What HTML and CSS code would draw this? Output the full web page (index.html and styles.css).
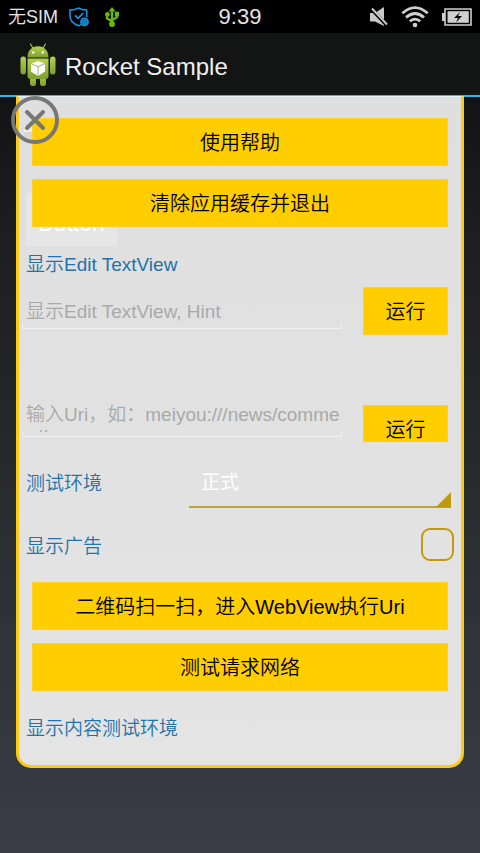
FILE: index.html
```html
<!DOCTYPE html>
<html lang="zh-CN">
<head>
<meta charset="utf-8">
<meta name="viewport" content="width=device-width, initial-scale=1">
<title>Rocket Sample</title>
<link rel="stylesheet" href="styles.css">
</head>
<body>
<div class="status">
  <div class="status-left">
    <span>无SIM</span>
    <svg class="shield" width="20" height="20" viewBox="0 0 20 20" fill="none" stroke="#1593dc" stroke-width="1.600"><path d="M9.500 1C7.500 2.300 4.500 3 1 3.100V9c0 4.500 3.400 7.800 8.500 9.800 1-.3 1.800-.7 2.600-1.200M9.500 1c2 1.300 4.500 2 8.200 2.100V10"/><path d="M6 8.300l3 3 5.200-5.200" stroke-width="1.800"/><circle cx="15.500" cy="14.800" r="3.600" fill="#0a5d92"/><path d="M14 13.500h3v2.600h-3z" stroke-width="1"/></svg>
    <svg class="usb" width="14" height="20" viewBox="0 0 14 20"><path d="M7 3v14M2 8v3.200L7 14.500M12 7v3.200L7 13.300" fill="none" stroke="#69b80d" stroke-width="2.400"/><path d="M7 0l3.500 4.500h-7zM9.800 4.800H14v4.400H9.800z" fill="#69b80d"/><circle cx="2.400" cy="7.300" r="2.400" fill="#69b80d"/><circle cx="7" cy="17" r="2.900" fill="#69b80d"/></svg>
  </div>
  <time class="clock">9:39</time>
  <div class="status-right">
    <svg width="18" height="20" viewBox="0 0 18 20"><path d="M0 6h5l9-6v19L5 14.500H0z" fill="#c9c9c9"/><path d="M0 .5l17 18" stroke="#000" stroke-width="3.600"/><path d="M2 1.500l15 16" stroke="#c9c9c9" stroke-width="2"/></svg>
    <svg width="28" height="22" viewBox="0 0 28 22" fill="none" stroke="#cfcfcf" stroke-width="2.800"><path d="M1.300 7.200Q14-4 26.700 7.200M5 11.400q9-7.800 18 0M8.800 15.300q5.200-4.400 10.400 0"/><circle cx="14" cy="19" r="2.300" fill="#cfcfcf" stroke="none"/></svg>
    <svg width="30" height="18" viewBox="0 0 30 18"><path d="M0 5h3v8H0z" fill="#cfcfcf"/><path d="M3 1h26v16H3z" fill="none" stroke="#cfcfcf" stroke-width="1.600"/><path d="M5.500 3.200h21.300v11.600H5.500z" fill="#cfcfcf"/><path d="M18 4l-6 6h4l-2 4.500 6-6.500h-4z" fill="#000"/></svg>
  </div>
</div>
<header class="appbar">
  <svg width="36" height="44" viewBox="0 0 36 44">
    <defs><linearGradient id="g" x2="0" y2="1"><stop offset="0" stop-color="#b4d24c"/><stop offset="1" stop-color="#7da02c"/></linearGradient></defs>
    <path d="M10.500 1l3 5M25.500 1l-3 5" stroke="#9dbb3e" stroke-width="1.300" stroke-linecap="round"/>
    <g fill="url(#g)"><path d="M7.500 14.500C7.500 7.500 12 3.300 18 3.300s10.500 4.200 10.500 11.200z"/><rect x=".5" y="13.500" width="5.500" height="18" rx="2.700"/><rect x="30" y="13.500" width="5.500" height="18" rx="2.700"/><rect x="10" y="30" width="6" height="13" rx="2.800"/><rect x="20" y="30" width="6" height="13" rx="2.800"/><path d="M7.500 15.500h21V33q0 3-3 3h-15q-3 0-3-3z"/></g>
    <circle cx="13.200" cy="9.500" r="1.200" fill="#fff"/><circle cx="22.800" cy="9.500" r="1.200" fill="#fff"/>
    <path d="M18 18l7 2.600v8L18 33l-7-4.400v-8z" fill="#fff"/><path d="M11 20.600l7 3 7-3M18 23.600V33" fill="none" stroke="#a2ae78"/>
  </svg>
  <h1>Rocket Sample</h1>
</header>
<main class="panel">
  <button class="close" type="button" aria-label="关闭"><svg width="48" height="48" viewBox="0 0 48 48" fill="none" stroke="#777"><circle cx="24" cy="24" r="22" stroke-width="4"/><path d="M16 16l16 16M32 16L16 32" stroke-width="4" stroke-linecap="round"/></svg></button>
  <div class="stack first">
    <div class="ghost-tab"></div>
    <button class="btn" type="button">使用帮助</button>
  </div>
  <div class="stack">
    <div class="ghost">Button</div>
    <button class="btn" type="button">清除应用缓存并退出</button>
  </div>
  <label class="caption" for="edit">显示Edit TextView</label>
  <div class="row">
    <div class="field"><input id="edit" type="text" placeholder="显示Edit TextView, Hint"></div>
    <button class="btn run" type="button">运行</button>
  </div>
  <div class="row uri">
    <div class="field"><textarea id="uri" rows="1" aria-label="Uri" placeholder="输入Uri，如：meiyou:///news/comme&#10;  //"></textarea></div>
    <button class="btn run" type="button">运行</button>
  </div>
  <div class="option env">
    <label for="env">测试环境</label>
    <div class="spinner"><select id="env"><option>正式</option></select></div>
  </div>
  <div class="option ads">
    <label for="ads">显示广告</label>
    <input id="ads" type="checkbox">
  </div>
  <button class="btn" type="button">二维码扫一扫，进入WebView执行Uri</button>
  <button class="btn last" type="button">测试请求网络</button>
  <p class="footer">显示内容测试环境</p>
</main>
</body>
</html>
```
FILE: styles.css
```css
* { box-sizing: border-box; }
body {
  margin: 0;
  min-height: 100vh;
  background: linear-gradient(#0c0c0c, #1d1f21 30%, #2e3438 75%, #3a3c46);
  font-family: "Liberation Sans", "Noto Sans CJK SC", sans-serif;
  font-weight: 350;
  font-size: 19px;
}
button, input, textarea, select { font: inherit; }
.status {
  display: grid;
  grid-template-columns: 1fr auto 1fr;
  align-items: center;
  height: 33px;
  padding: 0 8px;
  background: #000;
  color: #e4e4e4;
  font-size: 18px;
}
.status-left, .status-right { display: flex; align-items: center; }
.status-left { gap: 11px; line-height: 24px; }
.usb { margin-left: 5px; }
.status-right { justify-content: flex-end; gap: 13px; }
.clock { font-size: 22px; }
.appbar {
  display: flex;
  align-items: center;
  gap: 9px;
  height: 64px;
  padding: 2px 20px 0;
  background: #131414;
  border-bottom: 2px solid #33b5e5;
}
.appbar h1 { margin: 4px 0 0; font-size: 24px; font-weight: 400; color: #f0f0f0; }
.panel {
  position: relative;
  margin: -1px 16px 0;
  padding: 21px 13px 0;
  border: 3px solid #fdca14;
  border-top: 1px solid #e4f3f8;
  border-radius: 0 0 15px 15px;
  background: linear-gradient(#dfdfdf, #e4e4e4);
}
.close {
  position: absolute;
  z-index: 2;
  left: -8px;
  top: -1px;
  padding: 0;
  border: 0;
  background: none;
}
.close svg { display: block; }
.btn {
  position: relative;
  display: block;
  width: 100%;
  height: 48px;
  padding: 0 0 2px;
  border: 1px solid #ffd02b;
  background: #ffcd00;
  color: #000;
  font-size: 20px;
}
.stack { position: relative; margin-top: 13px; }
.stack.first { margin-top: 0; }
.ghost-tab {
  position: absolute;
  left: -8px;
  top: 8px;
  width: 9px;
  height: 16px;
  border-top: 6px solid #ececec;
  background: #d6d6d6;
}
.ghost {
  position: absolute;
  left: -6px;
  top: 14px;
  width: 91px;
  height: 53px;
  padding: 16px 12px;
  border-radius: 2px;
  background: #e6e6e6;
  color: #fff;
  font-size: 23px;
  line-height: 28px;
}
.caption { display: block; margin: 26px 0 0 -6px; line-height: 24px; color: #2472aa; }
.row { display: flex; justify-content: space-between; margin: 10px 0 0 -10px; }
.field { position: relative; width: calc(100% - 106px); height: 42px; }
.field::after {
  content: "";
  position: absolute;
  left: 0;
  right: 0;
  bottom: 0;
  height: 5px;
  border: 1px solid #f0f0f0;
  border-top: 0;
}
.field input, .field textarea {
  display: block;
  width: 100%;
  padding: 0 4px;
  border: 0;
  outline: 0;
  background: none;
  resize: none;
  overflow: hidden;
  white-space: pre;
}
.field input { height: 50px; }
.field textarea { height: 28px; line-height: 22px; margin-top: 9px; }
.field ::placeholder { color: #a9a9a9; opacity: 1; }
.btn.run { width: 85px; }
.uri { height: 47px; margin-top: 60px; overflow: hidden; }
.uri .run { margin-top: 10px; flex-shrink: 0; }
.option { display: flex; align-items: center; justify-content: space-between; margin: 0 -6px; color: #2472aa; }
.env { height: 66px; padding-top: 14px; }
.env label, .ads label { padding-bottom: 2px; }
.spinner { position: relative; width: 262px; margin-right: 3px; border-bottom: 2px solid #c3a13a; }
.spinner select {
  appearance: none;
  display: block;
  width: 100%;
  height: 50px;
  padding: 2px 12px 0;
  border: 0;
  background: none;
  color: #fff;
  font-weight: 400;
}
.spinner::after {
  content: "";
  position: absolute;
  right: 0;
  bottom: -1px;
  border-left: 15px solid transparent;
  border-bottom: 15px solid #c19a0b;
}
.ads { height: 74px; }
.ads input {
  appearance: none;
  width: 33px;
  height: 33px;
  margin: 0 0 2px;
  border: 2px solid #c19a10;
  border-radius: 9px;
}
.btn.last { margin-top: 13px; }
.footer { margin: 26px 0 0 -6px; padding-bottom: 24px; line-height: 24px; color: #2472aa; }
```
